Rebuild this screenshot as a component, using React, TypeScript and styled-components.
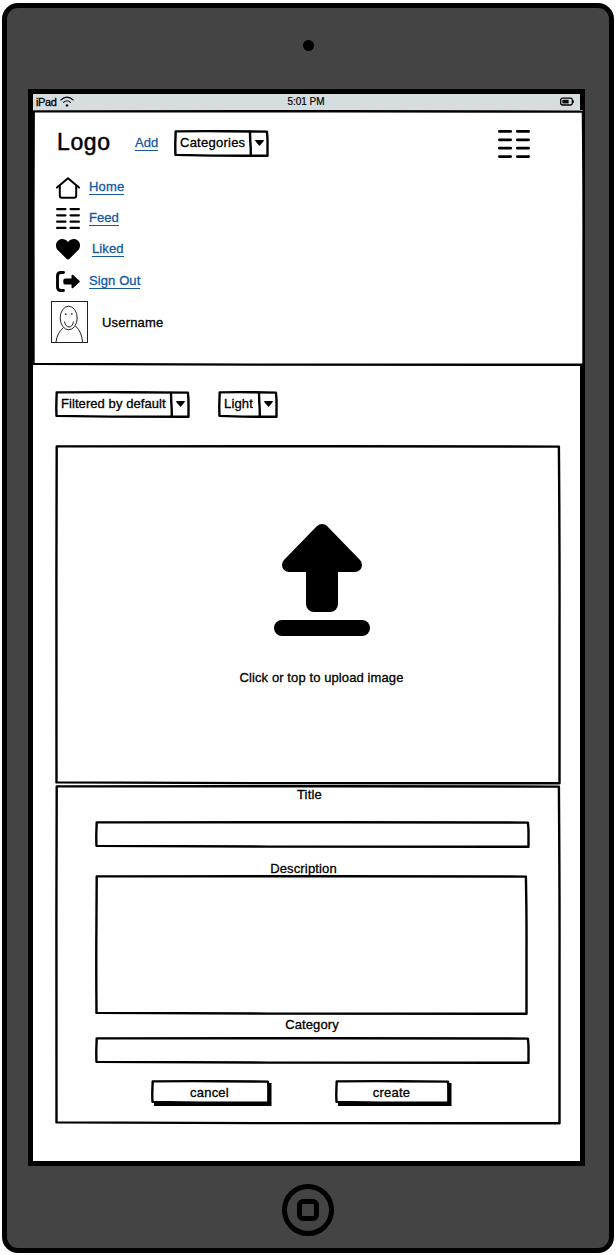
import React from 'react';
import styled, { createGlobalStyle } from 'styled-components';

const Global = createGlobalStyle`
  * { box-sizing: border-box; }
  body { margin: 0; background: #fff; color: #000; font-family: "Liberation Sans", Arial, sans-serif; font-size: 13px; line-height: 16px; }
`;

const Device = styled.div`
  width: 612px; height: 1250px; margin: 3px 0 0 2px; padding: 0 21px;
  border: 5px solid #000; border-radius: 16px; background: #444;
  display: flex; flex-direction: column;
`;
const TopBezel = styled.div`
  height: 81px; flex: none; display: flex; justify-content: center; padding-top: 32px;
`;
const Camera = styled.div`
  width: 11px; height: 11px; border-radius: 50%; background: #000;
`;
const Screen = styled.main`
  width: 557px; height: 1077px; flex: none; border: 5px solid #000; background: #fff;
`;
const BottomBezel = styled.div`
  flex: 1; display: flex; justify-content: center; padding-top: 18px;
`;
const HomeButton = styled.div`
  width: 52px; height: 52px; border: 5px solid #000; border-radius: 50%;
  display: flex; align-items: center; justify-content: center;
`;
const HomeSquare = styled.div`
  width: 22px; height: 22px; border: 5px solid #000; border-radius: 6px;
`;

const StatusBar = styled.div`
  height: 16px; padding: 0 6px 1px 3px; background: #d6dde0; font-size: 11px; line-height: 14px;
  display: grid; grid-template-columns: 1fr auto 1fr; align-items: center;
`;
const Carrier = styled.div`display: flex; align-items: center; gap: 4px;`;
const BatterySlot = styled.div`display: flex; justify-content: flex-end;`;
const Clock = styled.div`padding-left: 2px; font-size: 10px; -webkit-text-stroke: .2px #000;`;

const Header = styled.header`
  position: relative; width: 550px; height: 256px; padding: 19px 0 0 18px; background: #fff;
`;
const TopRow = styled.div`display: flex; align-items: center; height: 28px; padding-left: 6px;`;
const Logo = styled.div<{ $w: number }>`
  width: ${p => p.$w}px; font-size: 23px; line-height: 28px; letter-spacing: .6px; margin-top: -3px; -webkit-text-stroke: .5px #000;
`;
const Text = styled.span<{ $track?: number }>`
  letter-spacing: ${p => p.$track ?? 0}px; white-space: nowrap; -webkit-text-stroke: .3px currentColor;
`;
const Link = styled.a<{ $track?: number }>`
  color: #1259a0; border-bottom: 1px solid #1259a0; line-height: 14px; white-space: nowrap;
  letter-spacing: ${p => p.$track ?? 0}px; -webkit-text-stroke: .3px currentColor;
`;
const AddSlot = styled.div`width: 39px; display: flex; margin-top: 1px;`;
const MenuSlot = styled.div`margin: 2px 0 0 229px; display: flex;`;
const Nav = styled.nav`display: flex; flex-direction: column; padding: 15px 0 0 5px;`;
const NavItem = styled.div<{ $gap?: number; $h?: number }>`
  height: ${p => p.$h ?? 31}px; display: flex; align-items: center; gap: ${p => p.$gap ?? 9}px;
`;
const User = styled.div`display: flex; align-items: center; gap: 14px; margin-top: 4px;`;
const UserName = styled.div`padding-top: 2px;`;

const SelectBox = styled.div<{ $w: number }>`
  position: relative; width: ${p => p.$w}px; height: 27px; flex: none; display: flex; align-items: center; padding: 0 6px 1px;
`;
const Filters = styled.div`display: flex; gap: 28px; padding: 25px 0 0 22px;`;
const Upload = styled.section`
  position: relative; width: 506px; height: 340px; margin: 27px 0 0 22px; padding: 78px 0 0 27px;
  display: flex; flex-direction: column; align-items: center; gap: 34px;
`;
const Form = styled.section`
  position: relative; width: 506px; height: 340px; margin: 0 0 0 22px; padding: 2px 0 0 40px;
  display: flex; flex-direction: column; align-items: flex-start;
`;
const Field = styled.label<{ $shift?: number }>`
  width: 434px; display: flex; justify-content: center; line-height: 16px; padding-right: ${p => p.$shift ?? 0}px;
`;
const Input = styled.div<{ $w: number; $h: number; $mt: number; $mb: number }>`
  position: relative; width: ${p => p.$w}px; height: ${p => p.$h}px; flex: none; margin: ${p => p.$mt}px 0 ${p => p.$mb}px;
`;
const Actions = styled.div`display: flex; gap: 64px; padding-left: 56px;`;
const Button = styled.div<{ $w: number }>`
  position: relative; width: ${p => p.$w}px; height: 26px; display: flex; align-items: center; justify-content: center; padding-bottom: 1px; padding-right: 3px;
`;
const Ink = styled.svg<{ $left?: number }>`
  position: absolute; left: ${p => p.$left ?? 0}px; top: 0; overflow: visible; pointer-events: none;
`;

/* Hand-drawn rectangle: nearly straight edges that drift by a fraction of a pixel. */
function Sketch({ w, h, divider, shadow, left, weight = 2.4 }: { w: number; h: number; divider?: number; shadow?: boolean; left?: number; weight?: number }) {
  const b = w - 1.5, e = h - 1.3;
  return (
    <Ink $left={left} width={w} height={h} fill="none" stroke="#000" strokeWidth={weight} strokeLinejoin="round" strokeLinecap="round">
      {shadow && <path d={`M${w - .5} 3V${h}H3`} strokeWidth="4" strokeLinecap="butt" strokeLinejoin="miter" />}
      <path d={`M1.7 1.4Q${w * .3} .9 ${w * .55} 1.2L${b - .6} 1.6Q${b + .2} ${h * .3} ${b} ${h * .55}L${b} ${e}Q${w * .6} ${e + .1} ${w * .4} ${e - .1}L1.5 ${e - .8}Q1.1 ${h * .6} 1.4 ${h * .4}Z`} />
      {divider && <path d={`M${divider} 2Q${divider + .1} ${h * .4} ${divider + .7} ${h * .65}L${divider + .8} ${h - 2}`} />}
    </Ink>
  );
}

const Caret = styled.svg`position: absolute; right: 5px; top: 10px;`;

function Select({ w, label, track }: { w: number; label: string; track?: number }) {
  return (
    <SelectBox $w={w}>
      <Sketch w={w} h={27} divider={w - 19} />
      <Text $track={track}>{label}</Text>
      <Caret width="9" height="6" viewBox="0 0 9 6"><path d="M.7.7H8.3L4.5 5Z" stroke="#000" strokeWidth="1.2" strokeLinejoin="round" /></Caret>
    </SelectBox>
  );
}

function Columns({ w, h, weight }: { w: number; h: number; weight: number }) {
  const m = weight / 2;
  const l = w * .44;
  return (
    <svg width={w} height={h} stroke="#000" strokeWidth={weight} strokeLinecap="round">
      {[0, 1, 2, 3].map(i => {
        const y = m + i * (h - weight) / 3;
        return <path key={i} d={`M${m} ${y}H${l - m}M${w - l + m} ${y}H${w - m}`} />;
      })}
    </svg>
  );
}

const HomeIcon = () => (
  <svg width="24" height="22" fill="none" stroke="#000" strokeWidth="2" strokeLinecap="round" strokeLinejoin="round">
    <path d="M1 10.6L12 1.2L23 10.6M3.8 9V18.6Q3.8 20.8 6 20.8H18Q20.2 20.8 20.2 18.6V9" />
  </svg>
);
const HeartIcon = () => (
  <svg width="24" height="21" viewBox="0 0 24 21">
    <path d="M12 20.5Q11.2 20.5 10.2 19.5L2.2 11.5C-.8 8.5-.6 4.2 2 1.8C4.8-.8 9-.4 12 3C15-.4 19.2-.8 22 1.8C24.6 4.2 24.8 8.5 21.8 11.5L13.8 19.5Q12.8 20.5 12 20.5Z" />
  </svg>
);
const SignOutIcon = () => (
  <svg width="24" height="21" viewBox="0 0 24 21">
    <path d="M7.5 1.5H5Q1.5 1.5 1.5 5V16Q1.5 19.5 5 19.5H7.5" fill="none" stroke="#000" strokeWidth="2.9" strokeLinecap="round" />
    <path d="M9.5 7.4H15.5V4.7Q15.8 3 17.2 4L23.4 9.8Q24.2 10.5 23.4 11.2L17.2 17Q15.8 18 15.5 16.3V13.6H9.5Q7.3 13.6 7.3 11.4V9.6Q7.3 7.4 9.5 7.4Z" />
  </svg>
);
const Avatar = () => (
  <svg width="37" height="42" fill="none" stroke="#222" strokeWidth="1">
    <rect x=".5" y=".5" width="36" height="41" />
    <ellipse cx="17.7" cy="17" rx="8.5" ry="11.8" />
    <path d="M13.5 20.5Q14.5 26 18 26T22.5 20.5M12.5 26.5Q6 32 5 41M24.5 25Q31 31 31.5 41" />
    <path d="M14.7 12.4V13.9M20.8 12.2V13.7" strokeWidth="1.5" />
  </svg>
);
const WifiIcon = () => (
  <svg width="14" height="11" fill="none" stroke="#000" strokeWidth="1.1" strokeLinecap="round">
    <path d="M.8 4Q7-1.8 13.2 4M3.6 6.3Q7 3.3 10.4 6.3" /><circle cx="7" cy="9.4" r="1.2" fill="#000" stroke="none" />
  </svg>
);
const BatteryIcon = () => (
  <svg width="14" height="9">
    <rect x=".7" y="1.2" width="11.6" height="6.8" rx="1.8" fill="none" stroke="#000" strokeWidth="1.3" />
    <rect x="2.4" y="2.8" width="6.2" height="3.6" /><path d="M13.2 3.2V6" stroke="#000" strokeWidth="1.2" />
  </svg>
);
const UploadIcon = () => (
  <svg width="96" height="113" viewBox="0 0 96 113">
    <path d="M15 42H81L48 8Z" stroke="#000" strokeWidth="14" strokeLinejoin="round" />
    <rect x="32" y="40" width="32" height="49" rx="8" />
    <rect y="97" width="96" height="16" rx="8" />
  </svg>
);

export default function App() {
  return (
    <>
      <Global />
      <Device>
        <TopBezel><Camera /></TopBezel>
        <Screen>
          <StatusBar>
            <Carrier><Text $track={-.4}>iPad</Text><WifiIcon /></Carrier>
            <Clock>5:01 PM</Clock>
            <BatterySlot><BatteryIcon /></BatterySlot>
          </StatusBar>
          <Header>
            <Sketch w={553} h={256} left={-1.5} />
            <TopRow>
              <Logo $w={78}>Logo</Logo>
              <AddSlot><Link>Add</Link></AddSlot>
              <Select w={95} label="Categories" track={.25} />
              <MenuSlot><Columns w={32} h={28} weight={2.8} /></MenuSlot>
            </TopRow>
            <Nav>
              <NavItem><HomeIcon /><Link $track={.2}>Home</Link></NavItem>
              <NavItem><Columns w={24} h={21} weight={2.2} /><Link $track={0}>Feed</Link></NavItem>
              <NavItem $gap={12} $h={31}><HeartIcon /><Link $track={.1}>Liked</Link></NavItem>
              <NavItem $h={32}><SignOutIcon /><Link $track={.1}>Sign Out</Link></NavItem>
            </Nav>
            <User><Avatar /><UserName><Text $track={.17}>Username</Text></UserName></User>
          </Header>
          <Filters>
            <Select w={135} label="Filtered by default" track={.07} />
            <Select w={60} label="Light" track={.15} />
          </Filters>
          <Upload>
            <Sketch w={506} h={339.5} />
            <UploadIcon />
            <Text $track={.1}>Click or top to upload image</Text>
          </Upload>
          <Form>
            <Sketch w={506} h={339.5} />
            <Field $shift={5}><Text $track={.2}>Title</Text></Field>
            <Input $w={435} $h={27} $mt={18} $mb={13}><Sketch w={435} h={27} /></Input>
            <Field $shift={17}><Text $track={.15}>Description</Text></Field>
            <Input $w={433} $h={140} $mt={-2} $mb={2}><Sketch w={433} h={140} /></Input>
            <Field><Text $track={.1}>Category</Text></Field>
            <Input $w={435} $h={27} $mt={4} $mb={16}><Sketch w={435} h={27} /></Input>
            <Actions>
              <Button $w={120}><Sketch w={119} h={24} shadow /><Text $track={.2}>cancel</Text></Button>
              <Button $w={116}><Sketch w={115} h={24} shadow /><Text $track={.2}>create</Text></Button>
            </Actions>
          </Form>
        </Screen>
        <BottomBezel><HomeButton><HomeSquare /></HomeButton></BottomBezel>
      </Device>
    </>
  );
}
